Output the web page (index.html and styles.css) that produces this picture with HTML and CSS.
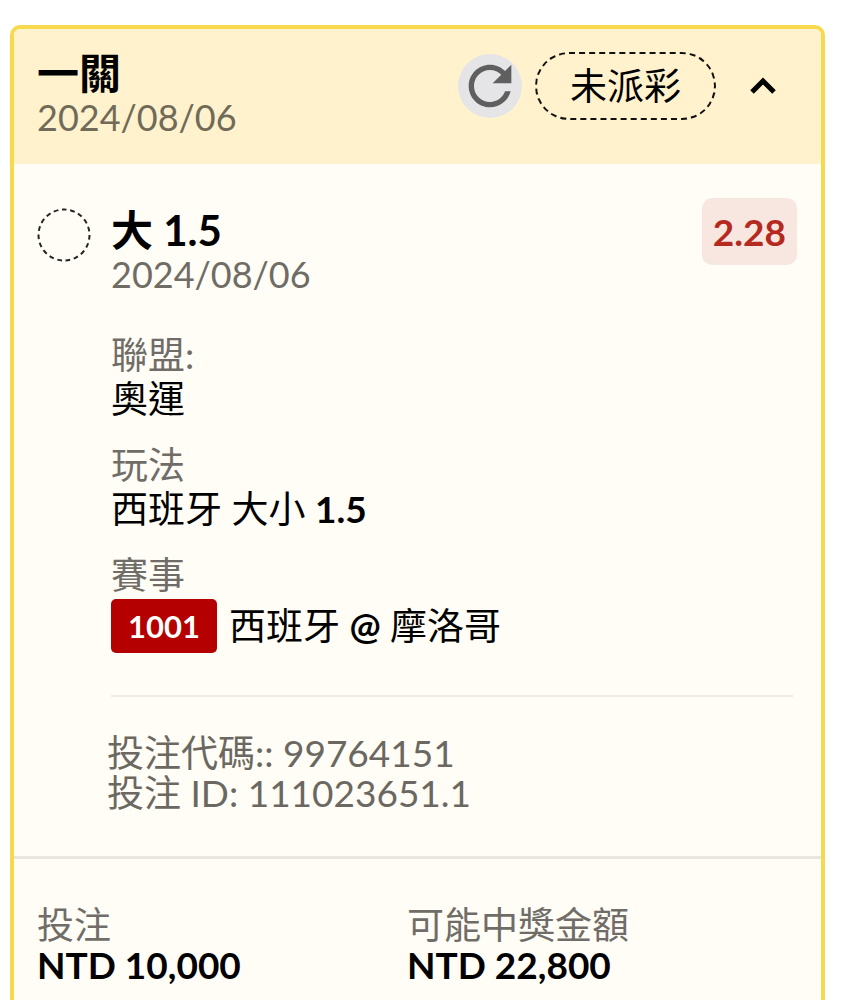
FILE: index.html
```
<!DOCTYPE html>
<html lang="zh-Hant">
<head>
    <meta charset="utf-8">
    <meta name="viewport" content="width=device-width, initial-scale=1">
    <title>一關 2024/08/06</title>
    <link rel="stylesheet" href="styles.css">
</head>
<body>
<article class="bet-card">
    <header class="bet-header">
        <div class="heading">
            <h1 class="title">一關</h1>
            <div class="muted">2024/08/06</div>
        </div>
        <div class="actions">
            <button type="button" class="refresh-btn" aria-label="重新整理">
                <svg width="64" height="64" viewBox="0 0 24 24">
                    <path fill="#5f5f5f" d="M17.650 6.350C16.200 4.900 14.210 4 12 4c-4.420 0-7.990 3.580-7.990 8s3.570 8 7.990 8c3.730 0 6.840-2.550 7.730-6h-2.080c-.82 2.330-3.040 4-5.650 4-3.310 0-6-2.690-6-6s2.690-6 6-6c1.660 0 3.140.69 4.220 1.780L13 11h7V4l-2.350 2.350z"/>
                </svg>
            </button>
            <span class="status">未派彩</span>
            <button type="button" class="toggle-btn" aria-label="收合" aria-expanded="true">
                <svg width="28" height="20" viewBox="0 0 28 20">
                    <path d="M3 16L14 5L25 16" fill="none" stroke="#000" stroke-width="5"/>
                </svg>
            </button>
        </div>
    </header>

    <section class="selection">
        <div class="selection-top">
            <svg class="ring" width="54" height="54" viewBox="0 0 54 54">
                <circle cx="27" cy="27" r="25.500" fill="none" stroke="#222" stroke-width="2" pathLength="152" stroke-dasharray="4.500 3.500"/>
            </svg>
            <div class="heading">
                <h2 class="title">大 1.5</h2>
                <div class="muted">2024/08/06</div>
            </div>
            <span class="odds">2.28</span>
        </div>
        <dl class="details">
            <div>
                <dt>聯盟:</dt>
                <dd>奧運</dd>
            </div>
            <div>
                <dt>玩法</dt>
                <dd>西班牙 大小 <b>1.5</b></dd>
            </div>
            <div>
                <dt>賽事</dt>
                <dd class="match"><span class="match-no">1001</span><span>西班牙 <b>@</b> 摩洛哥</span></dd>
            </div>
        </dl>
        <div class="codes">
            <div>投注代碼:: 99764151</div>
            <div>投注 ID: 111023651.1</div>
        </div>
    </section>

    <dl class="totals">
        <div>
            <dt>投注</dt>
            <dd>NTD 10,000</dd>
        </div>
        <div>
            <dt>可能中獎金額</dt>
            <dd>NTD 22,800</dd>
        </div>
    </dl>
</article>
</body>
</html>
```
FILE: styles.css
```
* {
    box-sizing: border-box;
}

body {
    display: flex;
    min-height: 100vh;
    margin: 0;
    padding: 25px 16px 0 10px;
    background: #fff;
    color: #000;
    font-family: Lato, "Noto Sans CJK TC", sans-serif;
    font-size: 37px;
    line-height: 44px;
}

h1, h2, dl, dd {
    margin: 0;
}

button {
    display: flex;
    align-items: center;
    justify-content: center;
    padding: 0;
    border: 0;
    background: none;
    cursor: pointer;
}

.bet-card {
    flex: 1;
    border: 4px solid #f6d94c;
    border-bottom: 0;
    border-radius: 10px 10px 0 0;
    background: #fffdf5;
}

.bet-header {
    display: flex;
    justify-content: space-between;
    padding: 23px 24px 24px 23px;
    border-radius: 6px 6px 0 0;
    background: #fff2cc;
}

.title {
    font-size: 42px;
    font-weight: 700;
    line-height: 43px;
}

.muted {
    color: #6f6c66;
    font-size: 36px;
    line-height: 45px;
}

.bet-header .muted {
    color: #706a58;
}

.actions {
    display: flex;
    align-items: center;
    align-self: flex-start;
    gap: 13px;
}

.refresh-btn {
    width: 64px;
    height: 64px;
    border-radius: 50%;
    background: #e5e5e7;
}

.status {
    padding: 10px 33px;
    border: 2px dashed #111;
    border-radius: 34px;
}

.toggle-btn {
    width: 68px;
    height: 64px;
}

.selection {
    padding: 34px 24px 43px 23px;
    border-bottom: 3px solid #e8e6e1;
}

.selection-top {
    display: flex;
    align-items: flex-start;
}

.ring {
    margin: 10px 20px 0 0;
}

.selection-top .heading {
    flex: 1;
    padding-top: 11px;
}

.odds {
    padding: 12px 11px;
    border-radius: 10px;
    background: #f8e7e1;
    color: #b52a20;
    font-weight: 700;
    line-height: 43px;
}

.details {
    display: grid;
    gap: 22px;
    margin: 0 4px 0 74px;
    padding: 36px 0 42px;
    border-bottom: 2px solid #eeece7;
}

dt {
    color: #706d68;
}

.match {
    display: flex;
    align-items: center;
    gap: 12px;
    padding-top: 2px;
}

.match-no {
    padding: 5px 17px;
    border-radius: 5px;
    background: #b50000;
    color: #fff;
    font-size: 31px;
    font-weight: 700;
}

.codes {
    padding: 36px 0 0 70px;
    color: #6b6862;
    line-height: 40px;
}

.totals {
    display: grid;
    grid-template-columns: 1fr 1fr;
    padding: 46px 44px 14px 23px;
    line-height: 40px;
}

.totals dd {
    font-weight: 700;
}
```
